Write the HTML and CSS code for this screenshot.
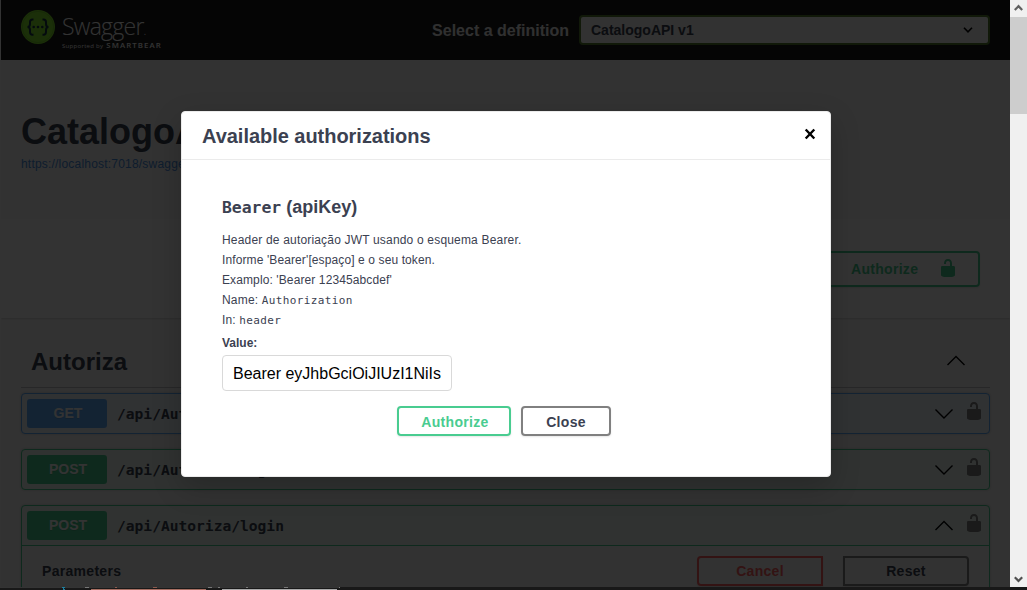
FILE: index.html
```html
<!DOCTYPE html>
<html lang="pt-BR">
<head>
<meta charset="utf-8">
<title>Swagger UI</title>
<link rel="stylesheet" href="styles.css">
</head>
<body>
<svg width="0" height="0" class="defs">
  <symbol id="unlocked" viewBox="0 0 20 20"><path d="M15.8 8H14V5.6C14 2.703 12.665 1 10 1 7.334 1 6 2.703 6 5.6V6h2v-.801C8 3.754 8.797 3 10 3c1.203 0 2 .754 2 2.199V8H4c-.553 0-1 .646-1 1.199V17c0 .549.428 1.139.951 1.307l1.197.387C5.672 18.861 6.55 19 7.1 19h5.8c.549 0 1.428-.139 1.951-.307l1.196-.387c.524-.167.953-.757.953-1.306V9.199C17 8.646 16.352 8 15.8 8z"/></symbol>
  <symbol id="down" viewBox="0 0 20 12"><path d="M1.500 1.500 10 10l8.500-8.500" fill="none" stroke="#000" stroke-width="1.400"/></symbol>
  <symbol id="up" viewBox="0 0 20 12"><path d="M1.500 10 10 1.500 18.500 10" fill="none" stroke="#000" stroke-width="1.400"/></symbol>
</svg>
<div class="window">
  <div class="viewport">
    <div class="page">
      <header class="topbar">
        <div class="logo">
          <svg class="logo-mark" viewBox="0 0 34 34"><circle cx="17" cy="17" r="17" fill="#85ea2d"/><circle cx="17" cy="17" r="15.700" fill="none" stroke="#6fbf2a" stroke-width=".6"/><g fill="none" stroke="#173647" stroke-width="2"><path d="M12.500 9.500h-1c-2 0-2.500 1-2.500 2.500v2c0 2-.8 3-2.500 3 1.700 0 2.500 1 2.500 3v2c0 1.800.7 2.700 2.500 2.700h1"/><path d="M21.500 9.500h1c2 0 2.500 1 2.500 2.500v2c0 2 .8 3 2.500 3-1.700 0-2.500 1-2.500 3v2c0 1.800-.7 2.700-2.500 2.700h-1"/></g><g fill="#173647"><circle cx="12.700" cy="17" r="1.300"/><circle cx="17" cy="17" r="1.300"/><circle cx="21.300" cy="17" r="1.300"/></g></svg>
          <div class="logo-words"><span class="logo-name">Swagger<i>.</i></span><span class="logo-sub">Supported by <b>SMARTBEAR</b></span></div>
        </div>
        <div class="definition">
          <span>Select a definition</span>
          <div class="select"><span>CatalogoAPI v1</span><svg width="10" height="6" viewBox="0 0 10 6"><path d="M1 .8 5 4.800 9 .8" fill="none" stroke="#000" stroke-width="1.600"/></svg></div>
        </div>
      </header>
      <section class="info"><h1>CatalogoAPI</h1><a>https://localhost:7018/swagger/v1/swagger.json</a></section>
      <section class="schemes"><button class="btn authorize-main"><span>Authorize</span><svg width="20" height="20"><use href="#unlocked"/></svg></button></section>
      <main class="operations">
        <div class="tag"><h2>Autoriza</h2><svg width="20" height="12"><use href="#up"/></svg></div>
        <div class="op get"><div class="summary"><span class="method">GET</span><code>/api/Autoriza</code><svg class="arrow" width="20" height="12"><use href="#down"/></svg><svg class="lock" width="20" height="20"><use href="#unlocked"/></svg></div></div>
        <div class="op post"><div class="summary"><span class="method">POST</span><code>/api/Autoriza/register</code><svg class="arrow" width="20" height="12"><use href="#down"/></svg><svg class="lock" width="20" height="20"><use href="#unlocked"/></svg></div></div>
        <div class="op post open"><div class="summary"><span class="method">POST</span><code>/api/Autoriza/login</code><svg class="arrow" width="20" height="12"><use href="#up"/></svg><svg class="lock" width="20" height="20"><use href="#unlocked"/></svg></div>
          <div class="params"><h4>Parameters</h4><button class="btn cancel">Cancel</button><button class="btn reset">Reset</button></div></div>
      </main>
    </div>
    <div class="backdrop">
      <div class="modal">
        <div class="modal-head"><h3>Available authorizations</h3><svg width="12" height="12" viewBox="0 0 12 12"><path d="m1.700 1.500 8.600 9M10.300 1.500l-8.600 9" stroke="#000" stroke-width="2.400"/></svg></div>
        <div class="modal-body">
          <h4><code>Bearer</code> (apiKey)</h4>
          <p>Header de autoriação JWT usando o esquema Bearer.</p>
          <p class="tight">Informe 'Bearer'[espaço] e o seu token.</p>
          <p class="tight">Examplo: 'Bearer 12345abcdef'</p>
          <p>Name: <code>Authorization</code></p>
          <p class="tight">In: <code>header</code></p>
          <label>Value:</label>
          <div class="field">Bearer eyJhbGciOiJIUzI1NiIs</div>
          <div class="actions"><button class="btn authorize">Authorize</button><button class="btn close">Close</button></div>
        </div>
      </div>
    </div>
  </div>
  <div class="scrollbar">
    <svg width="17" height="17" viewBox="0 0 17 17"><path d="m4.800 10 3.700-3.800 3.700 3.800" fill="none" stroke="#606060" stroke-width="2.200"/></svg>
    <div class="thumb"></div>
    <svg class="last" width="17" height="17" viewBox="0 0 17 17"><path d="m4.800 7.200 3.700 3.800 3.700-3.800" fill="none" stroke="#505050" stroke-width="2.200"/></svg>
  </div>
</div>
<svg class="edge" width="1027" height="3" viewBox="0 0 1027 3"><path fill="#181818" d="M0 0h1027v3H0z"/><path fill="#343434" d="M0 0h340v1H0z"/><path fill="#777" d="M85 0h4v1h-4zM208 0h4v1h-4zM218 0h2v1h-2zM246 0h2v1h-2zM284 0h4v1h-4zM339 0h1v1h-1z"/><path fill="#8b5a4d" d="M115 0h2v1h-2zM153 0h4v1h-4z"/><path fill="#1f7fa0" d="M62 0h3v1h-1v1h-1v-1h-1zM63 2h2v1h-2z"/><path fill="#a86f62" d="M91 2h115v1H91z"/><path fill="#aaa" d="M222 2h115v1H222z"/></svg>
</body>
</html>
```
FILE: styles.css
```css
* { box-sizing: border-box; }
body { margin: 0; width: 1027px; height: 590px; overflow: hidden; background: #333; font-family: "Liberation Sans", Arial, sans-serif; color: #3b4151; }
h1, h2, h3, h4, p { margin: 0; }
svg { flex: none; }
.defs { position: absolute; }
.window { display: flex; height: 587px; }
.edge { display: block; }
.viewport { position: relative; width: 1010px; height: 587px; overflow: hidden; padding-left: 1px; background: #fff; }
.page { background: #fafafa; height: 587px; overflow: hidden; }
.topbar { display: flex; justify-content: space-between; height: 60px; padding: 0 20px; background: #1b1b1b; }
.logo { display: flex; padding-top: 10px; }
.logo-mark { width: 34px; height: 34px; }
.logo-words { display: flex; flex-direction: column; padding: 2px 0 0 7px; color: #fff; font-family: "Open Sans", sans-serif; white-space: nowrap; }
.logo-name { height: 29px; font-size: 23px; font-weight: 300; line-height: 29px; letter-spacing: -.75px; }
.logo-name i { font-size: 12px; font-style: normal; }
.logo-sub { height: 8px; font-size: 6px; line-height: 8px; letter-spacing: .3px; }
.logo-sub b { font-size: 7.8px; font-weight: 600; line-height: 8px; letter-spacing: 1.1px; margin-left: 1px; }
.definition { display: flex; align-items: center; gap: 10px; color: #f0f0f0; font-size: 16px; font-weight: bold; }
.definition > span { padding-top: 1px; }
.select { display: flex; align-items: center; justify-content: space-between; width: 411px; height: 30px; padding: 0 15px 0 10px; border: 2px solid #547f2d; border-radius: 4px; background: #f7f7f7; color: #3b4151; font-size: 14px; }
.info { height: 159px; padding: 51px 20px 0; }
.info h1 { font-size: 36px; line-height: 42px; }
.info a { display: block; margin-top: 4px; font-size: 12px; line-height: 15px; color: #4990e2; letter-spacing: .2px; }
.schemes { display: flex; justify-content: flex-end; height: 99px; padding: 32px 30px; background: #fff; box-shadow: 0 1px 2px rgba(0,0,0,.15); }
.btn { display: flex; align-items: center; justify-content: center; height: 30px; padding: 1px 0 0; border: 2px solid #808080; border-radius: 4px; background: transparent; box-shadow: 0 1px 2px rgba(0,0,0,.1); color: #3b4151; font: bold 14px "Liberation Sans", Arial, sans-serif; letter-spacing: .3px; }
.btn.authorize-main { width: 158px; height: 36px; justify-content: space-between; padding: 0 20px 0 27px; border-color: #49cc90; color: #49cc90; fill: #49cc90; }
.authorize-main svg { margin-top: -2px; }
.operations { padding: 20px 20px 0; }
.tag { display: flex; align-items: center; justify-content: space-between; height: 50px; padding: 0 24px 2px 10px; border-bottom: 1px solid rgba(59,65,81,.3); margin-bottom: 5px; }
.tag h2 { font-size: 24px; }
.tag svg { margin-top: -2px; }
.op { margin-bottom: 15px; border: 1px solid #61affe; border-radius: 4px; background: #eff7ff; box-shadow: 0 0 3px rgba(0,0,0,.19); }
.op.post { border-color: #49cc90; background: #edfaf4; }
.summary { display: flex; align-items: center; height: 39px; padding: 0 5px; }
.method { width: 80px; height: 29px; padding-left: 2px; border-radius: 3px; background: #61affe; color: #fff; font-size: 14px; font-weight: bold; line-height: 29px; text-align: center; text-shadow: 0 1px 0 rgba(0,0,0,.1); }
.post .method { background: #49cc90; }
.summary code { flex: 1; padding-left: 10px; font: bold 14.6px "DejaVu Sans Mono", monospace; }
.summary .lock { margin: -6px 0 0 10px; fill: #808080; }
.op.open { height: 110px; }
.open .summary { height: 40px; border-bottom: 1px solid #49cc90; }
.params { display: flex; align-items: center; height: 50px; padding: 0 20px; background: #fafafa; }
.params h4 { flex: 1; font-size: 14px; letter-spacing: .3px; }
.params .btn { width: 126px; padding: 0; }
.btn.cancel { margin-right: 20px; border-color: #ff6060; border-radius: 4px 0 0 4px; color: #ff6060; }
.btn.reset { border-radius: 0 4px 4px 0; }
.backdrop { position: absolute; inset: 0; background: rgba(0,0,0,.8); padding: 111px 0 0 181px; }
.modal { width: 650px; height: 366px; border: 1px solid #ebebeb; border-radius: 4px; background: #fff; box-shadow: 0 10px 30px rgba(0,0,0,.2); }
.modal-head { display: flex; align-items: center; justify-content: space-between; height: 48px; padding: 0 14px 0 20px; border-bottom: 1px solid #ebebeb; }
.modal-head h3 { padding-top: 2px; font-size: 20px; letter-spacing: -.03px; }
.modal-head svg { margin-top: -4px; }
.modal-body { padding: 36px 40px 0; }
.modal-body h4 { margin-bottom: 12px; font-size: 18px; line-height: 22px; }
.modal-body h4 code { font: bold 16.4px "DejaVu Sans Mono", monospace; }
.modal-body p { font-size: 12px; line-height: 20px; letter-spacing: .18px; white-space: nowrap; }
.modal-body p.tight { letter-spacing: .11px; }
.modal-body p code { font: 11px "DejaVu Sans Mono", monospace; letter-spacing: .38px; }
.modal-body label { display: block; height: 25px; font-size: 12px; font-weight: bold; line-height: 27px; }
.field { width: 230px; height: 36px; padding: 0 10px; border: 1px solid #d9d9d9; border-radius: 4px; color: #000; font-size: 16px; line-height: 35px; white-space: nowrap; overflow: hidden; }
.actions { display: flex; gap: 10px; padding: 15px 0 0 175px; }
.btn.authorize { width: 114px; padding-left: 2px; border-color: #49cc90; color: #49cc90; }
.btn.close { width: 90px; }
.scrollbar { display: flex; flex-direction: column; width: 17px; background: #f0f0f0; }
.thumb { height: 97px; background: #cdcdcd; }
.last { margin-top: auto; }
```
